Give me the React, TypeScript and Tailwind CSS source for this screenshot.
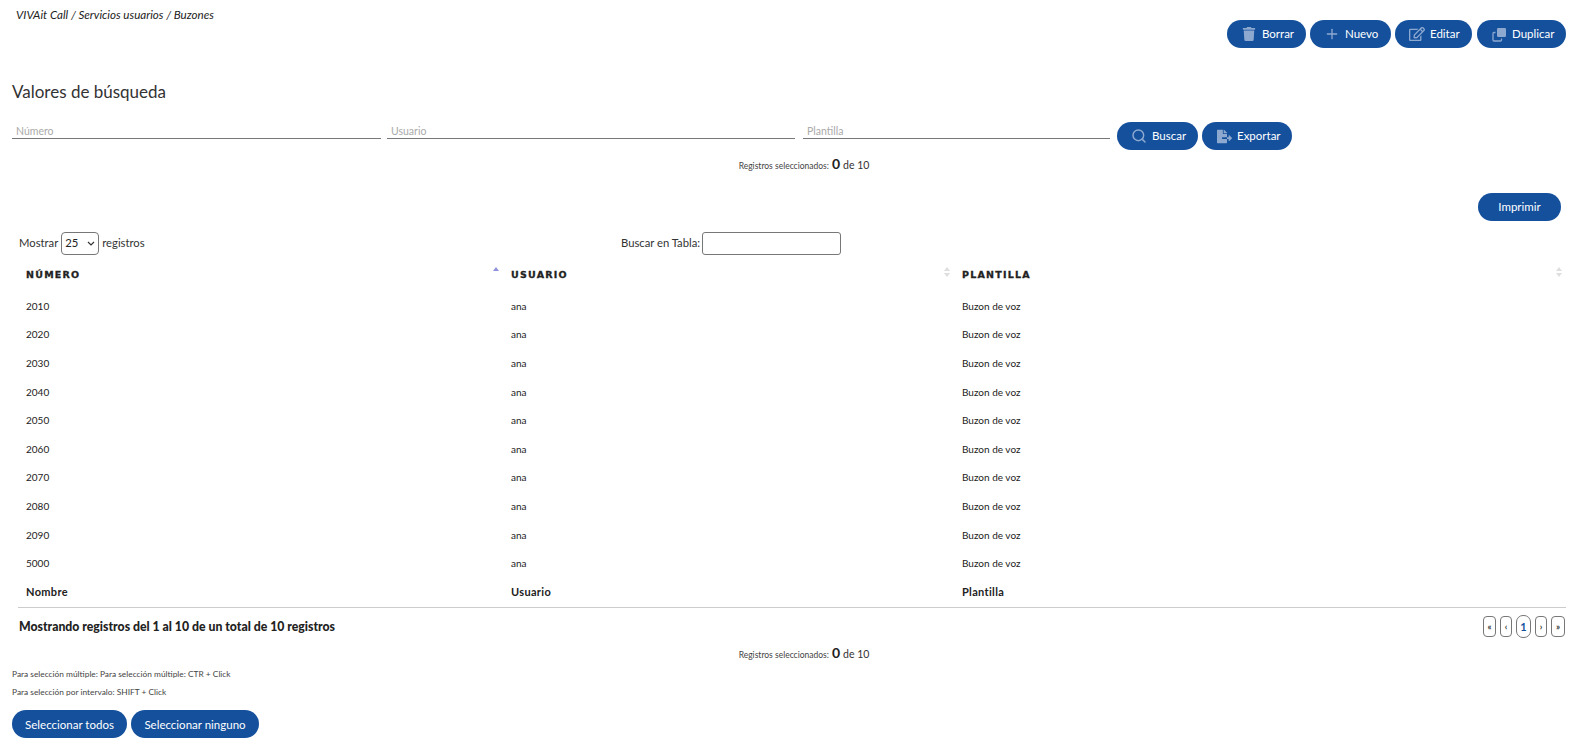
import { Plus, Search } from 'lucide-react';
import { FaTrash, FaRegEdit, FaFileExport } from 'react-icons/fa';
import type { ReactNode } from 'react';

const rows = ['2010', '2020', '2030', '2040', '2050', '2060', '2070', '2080', '2090', '5000'];

function Btn({ icon, label, className = '' }: { icon?: ReactNode; label: string; className?: string }) {
  return (
    <button className={`h-7 flex items-center rounded-full bg-[#14509c] text-white text-[11.5px] ${icon ? 'pl-[14px] justify-start' : 'justify-center'} ${className}`}>
      {icon && <span className="flex w-[16px] h-4 items-center justify-center text-[#8ea9d0] mr-[5px]">{icon}</span>}
      {label}
    </button>
  );
}

function DuplicateIcon() {
  return (
    <svg width="15" height="15" viewBox="0 0 15 15">
      <path d="M3.5 5.5 H2 a1 1 0 0 0 -1 1 V13 a1 1 0 0 0 1 1 H8.5 a1 1 0 0 0 1 -1 V11.5" fill="none" stroke="currentColor" strokeWidth="1.3" />
      <rect x="5" y="1" width="9" height="9" rx="1.2" fill="currentColor" />
    </svg>
  );
}

function Selected() {
  return (
    <div className="flex items-baseline justify-center pl-[23px] text-[#333] text-[10.5px]">
      <span className="text-[8.5px] text-[#444] mr-[3px]">Registros seleccionados:</span>
      <span className="text-[14px] font-bold text-[#222] mr-[3px]">0</span>
      <span>de 10</span>
    </div>
  );
}

function SortIcon({ active }: { active?: boolean }) {
  return (
    <svg width="6" height="12" viewBox="0 0 6 12" className="absolute right-1 top-[5px]">
      <path d="M3 1 L6 5 L0 5 Z" fill={active ? '#8f92dc' : '#dedede'} />
      {!active && <path d="M3 11 L6 7 L0 7 Z" fill="#dedede" />}
    </svg>
  );
}

function PageBtn({ label, width, current }: { label: string; width: string; current?: boolean }) {
  return (
    <span
      className={`flex items-center justify-center border border-[#777] ${width} ${
        current ? 'h-[23px] rounded-[7px] text-[11px] font-bold text-[#14509c]' : 'h-[21px] rounded-[4px] text-[9px] font-bold text-[#333]'
      }`}
    >
      {label}
    </span>
  );
}

export default function App() {
  return (
    <div className="w-[1585px] h-[752px] overflow-hidden bg-white text-[#333] font-['Lato','Open_Sans',sans-serif]">
      {/* Top bar */}
      <div className="flex justify-between pr-[19px] h-[80px]">
        <div className="pl-4 pt-[6px] text-[11.6px] italic text-[#222]">VIVAit Call / Servicios usuarios / Buzones</div>
        <div className="flex gap-1 pt-[20px]">
          <Btn className="w-[79px]" label="Borrar" icon={<FaTrash size={14} />} />
          <Btn className="w-[81px]" label="Nuevo" icon={<Plus size={16} />} />
          <Btn className="w-[77px]" label="Editar" icon={<FaRegEdit size={16} />} />
          <Btn className="w-[89px] ml-px" label="Duplicar" icon={<DuplicateIcon />} />
        </div>
      </div>

      <h2 className="pl-3 text-[17px] leading-[24px] text-[#333]">Valores de búsqueda</h2>

      {/* Search */}
      <div className="flex pl-3 mt-[17px] h-[29px]">
        <div className="w-[369px] h-[18px] border-b border-[#777] pl-1 text-[10.5px] leading-[20px] text-[#aaa]">Número</div>
        <div className="w-[408px] h-[18px] ml-[6px] border-b border-[#777] pl-1 text-[10.5px] leading-[20px] text-[#aaa]">Usuario</div>
        <div className="w-[307px] h-[18px] ml-2 border-b border-[#777] pl-1 text-[10.5px] leading-[20px] text-[#aaa]">Plantilla</div>
        <div className="flex gap-1 ml-[7px] pt-px">
          <Btn className="w-[81px]" label="Buscar" icon={<Search size={16} strokeWidth={2.2} />} />
          <Btn className="w-[90px]" label="Exportar" icon={<FaFileExport size={15} />} />
        </div>
      </div>

      <div className="mt-[6px] h-[16px] leading-[16px]">
        <Selected />
      </div>

      <div className="flex justify-end pr-6 mt-[21px]">
        <Btn className="w-[83px]" label="Imprimir" />
      </div>

      {/* Table controls */}
      <div className="relative flex items-center pl-[19px] mt-[10px] h-[24px] text-[11.25px]">
        <span>Mostrar</span>
        <span className="mx-[3px] flex items-center justify-between w-[38px] h-[23px] border border-[#777] rounded-[4px] px-[3px] text-[#222]">
          25
          <svg width="8" height="5" viewBox="0 0 8 5"><path d="M1 1 L4 4 L7 1" fill="none" stroke="#333" strokeWidth="1.2" /></svg>
        </span>
        <span>registros</span>
        <div className="absolute left-[621px] top-0 flex items-center h-[24px]">
          <span className="mr-[2px]">Buscar en Tabla:</span>
          <span className="w-[139px] h-[23px] border border-[#777] rounded-[3px]" />
        </div>
      </div>

      {/* Table */}
      <div className="px-[18px] pr-[19px] mt-[6px]">
        <table className="w-full table-fixed border-b border-[#ccc] text-[10px] text-[#222]">
          <colgroup>
            <col className="w-[485px]" />
            <col className="w-[451px]" />
            <col />
          </colgroup>
          <thead>
            <tr className="h-[31px] text-[9.5px] tracking-[0.13em] text-left font-['DejaVu_Sans',sans-serif] [-webkit-text-stroke:0.3px_#222]">
              <th className="relative pl-2 pb-[2px] font-bold">NÚMERO<SortIcon active /></th>
              <th className="relative pl-2 pb-[2px] font-bold">USUARIO<SortIcon /></th>
              <th className="relative pl-2 pb-[2px] font-bold">PLANTILLA<SortIcon /></th>
            </tr>
          </thead>
          <tbody>
            {rows.map((n) => (
              <tr key={n} className="h-[28.6px]">
                <td className="pl-2">{n}</td>
                <td className="pl-2">ana</td>
                <td className="pl-2">Buzon de voz</td>
              </tr>
            ))}
          </tbody>
          <tfoot>
            <tr className="h-[30px] text-[11px] font-bold text-left tracking-[0.03em]">
              <th className="pl-2 font-bold">Nombre</th>
              <th className="pl-2 font-bold">Usuario</th>
              <th className="pl-2 font-bold">Plantilla</th>
            </tr>
          </tfoot>
        </table>
      </div>

      <div className="flex items-center justify-between pl-[19px] pr-[20px] mt-[7px] h-[23px]">
        <span className="text-[12.25px] font-black text-[#222]">Mostrando registros del 1 al 10 de un total de 10 registros</span>
        <div className="flex items-center gap-[4px]">
          <PageBtn label="«" width="w-[13px]" />
          <PageBtn label="‹" width="w-[12px]" />
          <PageBtn label="1" width="w-[15px]" current />
          <PageBtn label="›" width="w-[12px]" />
          <PageBtn label="»" width="w-[14px]" />
        </div>
      </div>

      <div className="mt-[7px] h-[16px] leading-[16px]">
        <Selected />
      </div>

      <p className="pl-3 mt-[4px] text-[8.35px] leading-[18px] text-[#444]">Para selección múltiple: Para selección múltiple: CTR + Click</p>
      <p className="pl-3 text-[8.35px] leading-[18px] text-[#444]">Para selección por intervalo: SHIFT + Click</p>

      <div className="flex gap-1 pl-3 mt-[9px]">
        <Btn className="w-[115px]" label="Seleccionar todos" />
        <Btn className="w-[128px]" label="Seleccionar ninguno" />
      </div>
    </div>
  );
}
